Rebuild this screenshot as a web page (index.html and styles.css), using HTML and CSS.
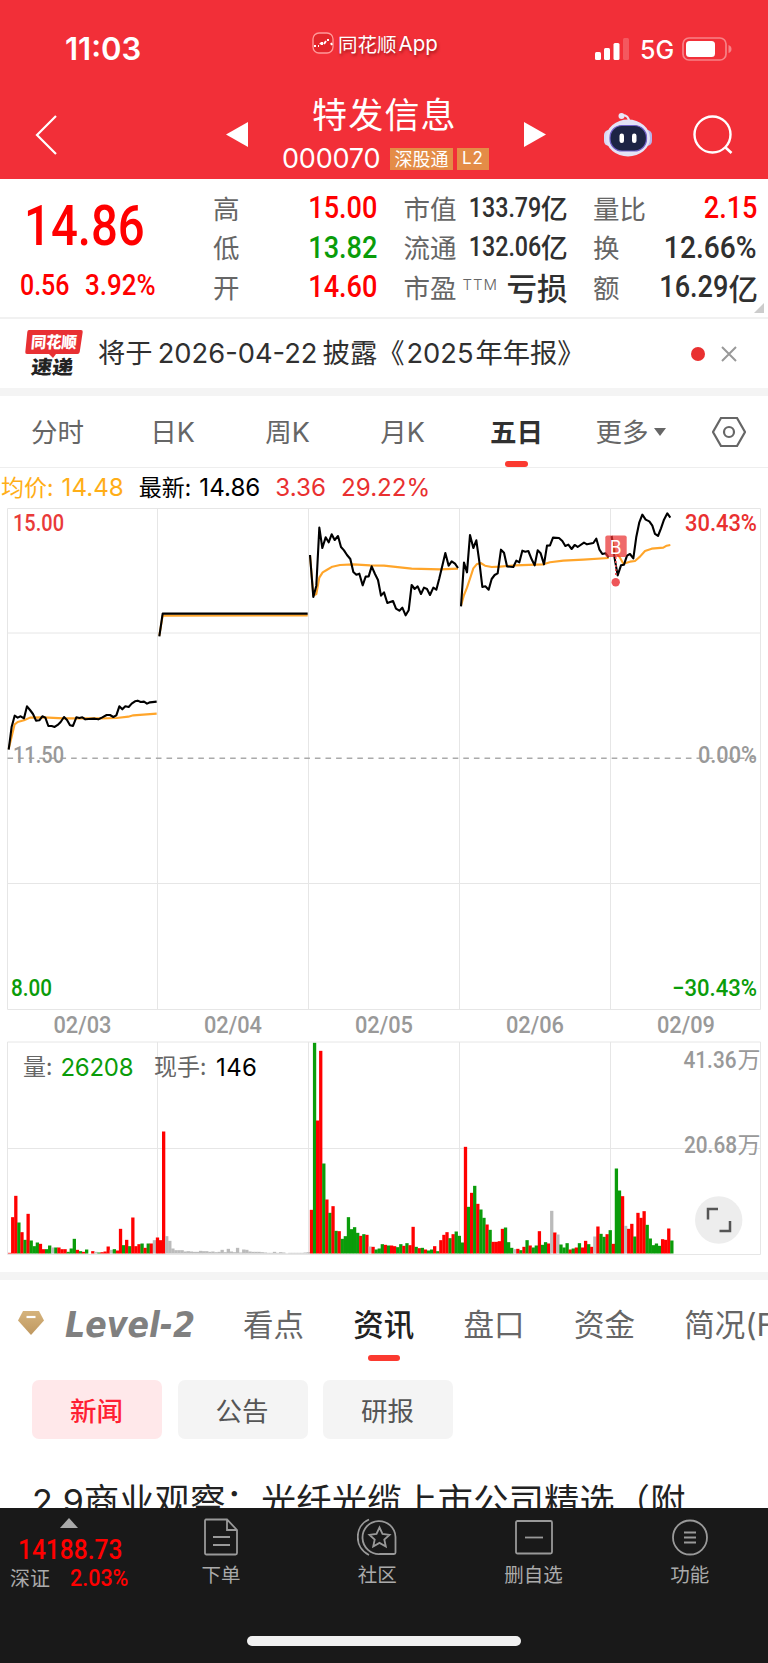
FILE: index.html
```html
<!DOCTYPE html>
<html lang="zh-CN">
<head>
<meta charset="utf-8">
<meta name="viewport" content="width=device-width, initial-scale=1">
<title>特发信息 000070</title>
<link rel="stylesheet" href="styles.css">
</head>
<body>

<div class="header">
  <div class="statusbar">
    <span class="clock">11:03</span>
    <span class="appname">
      <svg width="22" height="22" viewBox="0 0 22 22"><rect x="1" y="1" width="20" height="20" rx="6" fill="#e3262c" stroke="#f99" stroke-width="1.3"/><path d="M2 14h2M6 14h1M8 11l1 1M10 10v3M12 12l2-3M16 7v2M19 11l1 2" stroke="#fff" stroke-width="2"/></svg>
      同花顺<b>App</b>
    </span>
    <span class="signal">
      <svg width="34" height="22" viewBox="0 0 34 22" fill="#fff"><rect y="14" width="6" height="8" rx="1.5"/><rect x="9" y="10" width="6" height="12" rx="1.5"/><rect x="18.500" y="5" width="6" height="17" rx="1.500"/><rect x="28" width="6" height="22" rx="1.500" opacity=".2"/></svg>
      <span class="net">5G</span>
      <svg width="50" height="24" viewBox="0 0 50 24"><rect x="1" y="1" width="43" height="22" rx="6" fill="none" stroke="#fff" stroke-opacity=".4" stroke-width="1.700"/><rect x="4" y="4" width="29" height="16" rx="3.500" fill="#fff"/><path d="M46.500 8q3 1 3 4t-3 4z" fill="#fff" opacity=".4"/></svg>
    </span>
  </div>
  <div class="titlebar">
    <svg class="back" width="22" height="40" viewBox="0 0 22 40"><path d="M21 1L2 20l19 19" fill="none" stroke="#fff" stroke-width="2.200"/></svg>
    <svg class="prev" width="22" height="26" viewBox="0 0 22 26"><path d="M22 0v25L0 12.500z" fill="#fff"/></svg>
    <div class="stock">
      <div class="stockname">特发信息</div>
      <div class="stockcode"><span class="code">000070</span><span class="tag">深股通</span><span class="tag tag-l2">L2</span></div>
    </div>
    <svg class="next" width="22" height="26" viewBox="0 0 22 26"><path d="M0 0v25l22-12.500z" fill="#fff"/></svg>
    <svg class="robot" width="48" height="46" viewBox="0 0 48 46">
      <path d="M18 3q7 0 7 7" fill="none" stroke="#e9e6f7" stroke-width="2"/><circle cx="17.500" cy="4" r="3" fill="#e9e6f7"/>
      <rect y="18" width="10" height="16" rx="5" fill="#d8d8f4"/><rect x="38" y="18" width="10" height="16" rx="5" fill="#b7b4ea"/>
      <ellipse cx="24" cy="26" rx="22" ry="18.500" fill="#e4e3f6"/>
      <rect x="6" y="13.500" width="36.500" height="25.500" rx="12" fill="#1d2444" stroke="#7160c8" stroke-width="1.200"/>
      <rect x="15.500" y="21.500" width="4.500" height="9.500" rx="2.200" fill="#fff"/><rect x="28" y="21.500" width="4.500" height="9.500" rx="2.200" fill="#fff"/>
    </svg>
    <svg class="search" width="40" height="40" viewBox="0 0 40 40"><circle cx="19.500" cy="19.500" r="18" fill="none" stroke="#fff" stroke-width="2.400"/><path d="M32 32l6.500 6" stroke="#fff" stroke-width="2.600"/></svg>
  </div>
</div>

<div class="quote">
  <div class="price">
    <div class="last"><span class="din">14.86</span></div>
    <div class="change"><span class="din">0.56</span><span class="din pct">3.92%</span></div>
  </div>
  <div class="figures">
    <div class="col">
      <div class="fig"><label>高</label><span class="din red">15.00</span></div>
      <div class="fig"><label>低</label><span class="din green">13.82</span></div>
      <div class="fig"><label>开</label><span class="din red">14.60</span></div>
    </div>
    <div class="col">
      <div class="fig small"><label>市值</label><span class="din">133.79</span><i>亿</i></div>
      <div class="fig small"><label>流通</label><span class="din">132.06</span><i>亿</i></div>
      <div class="fig"><label>市盈<sup>TTM</sup></label><i class="loss">亏损</i></div>
    </div>
    <div class="col">
      <div class="fig"><label>量比</label><span class="din red">2.15</span></div>
      <div class="fig"><label>换</label><span class="din pct">12.66%</span></div>
      <div class="fig"><label>额</label><span class="din">16.29</span><i>亿</i></div>
    </div>
  </div>
  <div class="corner"></div>
</div>

<div class="notice">
  <svg width="58" height="48" viewBox="0 0 58 48">
    <path d="M4 0h52q2 0 1.700 2l-3 20q-.3 2-2.300 2H31l-3 4-4-4H2q-2 0-1.700-2l2-20q.2-2 1.700-2z" fill="#e83033"/>
    <text x="6" y="18" class="logo-top" textLength="46" lengthAdjust="spacingAndGlyphs" transform="skewX(-5) translate(1 0)">同花顺</text>
    <text x="7" y="44" class="logo-bottom" textLength="42" lengthAdjust="spacingAndGlyphs" transform="skewX(-7) translate(4 0)">速递</text>
  </svg>
  <p>将于<em>2026-04-22</em>披露《<em class="year">2025</em>年年报》</p>
  <span class="dot"></span>
  <svg class="close" width="16" height="16" viewBox="0 0 16 16"><path d="M1 1l14 14M15 1L1 15" stroke="#999" stroke-width="2"/></svg>
</div>

<div class="periods">
  <a>分时</a>
  <a>日<b>K</b></a>
  <a>周<b>K</b></a>
  <a>月<b>K</b></a>
  <a class="active">五日</a>
  <a>更多<span class="caret"></span></a>
  <svg width="34" height="30" viewBox="0 0 34 30" fill="none" stroke="#666" stroke-width="2.200"><path d="M9 1h16l8 14-8 14H9L1 15z"/><circle cx="17" cy="15" r="5"/></svg>
</div>

<div class="legend"><span class="avg">均价: <b>14.48</b></span><span>最新: <b>14.86</b></span><span class="up"><b>3.36</b></span><span class="up"><b>29.22%</b></span></div>

<svg class="chart" width="768" height="764" viewBox="0 508 768 764">
  <g fill="none" stroke="#e6e6e6" stroke-width="1">
    <path d="M7.500 508.500h753v501H7.500zM7.500 633h753M7.500 883.500h753M157.500 508.500v501M308.500 508.500v501M459.500 508.500v501M610.500 508.500v501"/>
    <path d="M7.500 1042h753v212.500H7.500zM7.500 1148.500h753M157.500 1042v212.500M308.500 1042v212.500M459.500 1042v212.500M610.500 1042v212.500"/>
  </g>
  <path d="M7.500 758.200h750" stroke="#aaa" stroke-width="1.500" stroke-dasharray="5.600 5"/>

  <!-- average and price lines, three units to a pixel -->
  <g transform="translate(0 395) scale(.33333)" fill="none" stroke-width="6.300" stroke-linejoin="round">
    <g stroke="#ffa52a">
      <polyline points="26,1062 44,988 53,981 72,976 90,968 130,967 190,970 240,970 300,970 350,969 385,965 400,961 430,959 470,956"/>
      <polyline points="478,722 488,662 923,661"/>
      <polyline points="930,480 940,602 949,597 958,548 968,532 980,525 997,515 1020,510 1060,508 1110,511 1152,512 1200,517 1235,521 1320,523 1374,521"/>
      <polyline points="1383,632 1392,600 1401,578 1412,545 1420,520 1430,508 1442,504 1455,512 1475,516 1500,515 1545,511 1630,508 1650,502 1690,497 1750,494 1826,489"/>
      <polyline points="1835,425 1845,470 1860,488 1870,506 1890,500 1905,498 1920,485 1935,468 1955,461 1990,458 2000,452 2011,450"/>
    </g>
    <g stroke="#000">
      <polyline points="26,1064 35,995 44,962 53,968 62,964 72,970 81,934 90,945 99,957 108,977 118,976 127,964 136,968 145,993 155,993 164,996 173,990 182,981 192,966 201,975 210,991 219,993 229,967 238,969 247,967 256,973 266,972 284,971 295,973 307,967 320,960 330,960 340,966 349,961 358,934 367,943 376,934 386,936 395,926 405,919 413,917 422,921 432,920 441,926 450,922 470,920"/>
      <polyline points="478,724 488,656 923,656"/>
      <polyline points="930,480 940,606 949,572 958,398 967,459 977,427 986,442 995,418 1004,435 1014,423 1023,456 1032,466 1041,480 1051,492 1060,531 1069,539 1078,536 1088,571 1097,545 1106,544 1115,514 1125,537 1134,555 1143,602 1152,592 1162,624 1179,618 1188,641 1198,647 1207,638 1217,661 1226,646 1235,570 1244,582 1253,574 1263,597 1272,578 1281,582 1290,600 1300,578 1309,584 1318,550 1327,512 1336,474 1346,512 1355,499 1365,506 1374,519"/>
      <polyline points="1383,634 1392,503 1401,532 1410,420 1420,459 1429,436 1438,500 1447,576 1456,574 1466,584 1475,552 1484,540 1493,535 1503,464 1512,473 1521,514 1540,516 1549,497 1558,502 1567,467 1576,470 1585,468 1595,493 1604,511 1613,466 1622,475 1632,508 1641,452 1650,451 1659,428 1677,429 1687,438 1696,453 1705,449 1715,462 1724,450 1733,456 1752,443 1761,448 1780,444 1789,431 1798,463 1807,477 1817,475 1826,487"/>
      <polyline points="1835,423 1844,490 1853,541 1863,511 1872,509 1881,482 1890,477 1900,490 1909,425 1918,382 1927,359 1937,374 1948,379 1957,392 1965,417 1974,423 1983,400 1992,374 2002,355 2011,368"/>
    </g>
  </g>

  <g id="volume"></g>

  <!-- buy point -->
  <path d="M615.800 557v20" stroke="#ee4a4d" stroke-width="1.500" stroke-dasharray="2 2"/>
  <circle cx="615.700" cy="582.300" r="4.200" fill="#ee5558"/>
  <rect x="605.300" y="535.500" width="21.400" height="21.500" rx="2" fill="#e93030" opacity=".72"/>
  <text x="609.700" y="553.500" class="buy">B</text>

  <g class="axis">
    <text x="13" y="530.500" fill="#e93a3a" textLength="51" lengthAdjust="spacingAndGlyphs">15.00</text>
    <text x="685" y="530.500" fill="#e93030" textLength="72" lengthAdjust="spacingAndGlyphs">30.43%</text>
    <text x="13" y="763" fill="#999" textLength="51" lengthAdjust="spacingAndGlyphs">11.50</text>
    <text x="698" y="763" fill="#999" textLength="59" lengthAdjust="spacingAndGlyphs">0.00%</text>
    <text x="11" y="995.500" fill="#0a9c0a" textLength="41" lengthAdjust="spacingAndGlyphs">8.00</text>
    <text x="672" y="995.500" fill="#0a9c0a" textLength="85" lengthAdjust="spacingAndGlyphs">−30.43%</text>
  </g>
  <g class="axis" fill="#999">
    <text x="53.500" y="1033" textLength="58" lengthAdjust="spacingAndGlyphs">02/03</text>
    <text x="204" y="1033" textLength="58" lengthAdjust="spacingAndGlyphs">02/04</text>
    <text x="355" y="1033" textLength="58" lengthAdjust="spacingAndGlyphs">02/05</text>
    <text x="506" y="1033" textLength="58" lengthAdjust="spacingAndGlyphs">02/06</text>
    <text x="657" y="1033" textLength="58" lengthAdjust="spacingAndGlyphs">02/09</text>
    <text x="683.500" y="1067.500" textLength="53" lengthAdjust="spacingAndGlyphs">41.36</text>
    <text x="737.500" y="1068" class="cjk">万</text>
    <text x="684" y="1152.500" textLength="53" lengthAdjust="spacingAndGlyphs">20.68</text>
    <text x="737.500" y="1153" class="cjk">万</text>
  </g>
  <g class="voltext">
    <text x="23" y="1075" fill="#666">量:</text>
    <text x="60.500" y="1075.500" fill="#0a9c0a" textLength="73" class="num">26208</text>
    <text x="154" y="1075" fill="#666">现手:</text>
    <text x="216" y="1075.500" fill="#000" textLength="41" class="num">146</text>
  </g>

  <circle cx="718.700" cy="1220" r="23.700" fill="#ededed"/>
  <path d="M718 1209h-10v10.500M730 1221v10h-10.500" fill="none" stroke="#555" stroke-width="2.500"/>
</svg>

<div class="band"></div>

<div class="sections">
  <svg class="gem" width="28" height="26" viewBox="0 0 28 26"><defs><linearGradient id="gold" x2="0" y2="1"><stop stop-color="#d5b37c"/><stop offset="1" stop-color="#bf9860"/></linearGradient></defs><path d="M6 1h16l5 9.500L14 25 1 10.500z" fill="url(#gold)"/><path d="M9.500 7h9" stroke="#fff" stroke-width="2.200"/></svg>
  <svg class="level" width="132" height="36" viewBox="0 0 132 36"><text x="0" y="31.500" textLength="130" lengthAdjust="spacingAndGlyphs">Level-2</text></svg>
  <a>看点</a>
  <a class="active">资讯</a>
  <a>盘口</a>
  <a>资金</a>
  <a>简况<b>(F10)</b></a>
</div>

<div class="pills">
  <button class="on">新闻</button>
  <button>公告</button>
  <button>研报</button>
</div>

<div class="news"><b>2.9</b>商业观察：光纤光缆上市公司精选（附</div>

<div class="footer">
  <div class="bar">
    <div class="index">
      <span class="tri"></span>
      <div class="points"><span class="din">14188.73</span></div>
      <div class="market">深证<span class="din pct">2.03%</span></div>
    </div>
    <div class="item">
      <svg width="36" height="38" viewBox="0 0 36 38"><path d="M3 1.500h21L34 12v23q0 1.500-1.500 1.500h-29Q2 36.500 2 35V3q0-1.500 1-1.500zM24 2v10h10M10 19h17M10 27h17"/></svg>
      <span>下单</span>
    </div>
    <div class="item">
      <svg width="40" height="38" viewBox="0 0 40 38"><path d="M12 1.500C-3 8-3 30 12 37M38.500 34.500q0 1.500-1.500 1.500H23A16.500 16.500 0 1 1 38.500 19zM22.500 9.500l3 6.500 7 .8-5.200 4.700 1.500 7-6.300-3.600-6.300 3.600 1.500-7-5.200-4.700 7-.8z"/></svg>
      <span>社区</span>
    </div>
    <div class="item">
      <svg width="38" height="38" viewBox="0 0 38 38"><rect x="1" y="3" width="36" height="32.500" rx="1.500"/><path d="M10 19.500h18"/></svg>
      <span>删自选</span>
    </div>
    <div class="item">
      <svg width="38" height="38" viewBox="0 0 38 38"><circle cx="19" cy="19.500" r="17"/><path d="M13 14.500h12M13 19.500h12M13 24.500h12"/></svg>
      <span>功能</span>
    </div>
  </div>
  <div class="home"></div>
</div>

<script>
// r = up, g = down, w = flat; the number is the height in thirds of a pixel
var days = [
  "r2 r109 r173 g93 r64 g41 r119 g39 g22 g33 r29 r13 g13 g24 w18 g18 r18 r13 r13 g5 g15 g44 r11 g7 r5 g12 w0 r7 w5 g3 r4 r6 r21 w11 g13 r9 r74 g25 r41 g22 r108 r22 r28 g30 r17 g30 r30 w40 r48",
  "r40 r366 w52 w38 w15 w10 w10 w10 w6 w7 w6 w5 w5 w8 w7 w7 w5 w6 w4 w5 w11 w4 w14 w6 w4 w17 w3 w12 w11 w6 w5 w5 w5 w4 w3 w2 w2 w5 w2 w4 w3 w1 w2 w2 w2 w2 w2 w3 w4",
  "r131 g632 r399 r608 g270 r162 g122 r142 g68 r67 g44 g52 g109 g73 g79 g62 r53 g58 r56 w21 r20 g12 g15 g28 r26 g24 r24 r22 g19 g28 r23 g31 r25 r80 g20 r16 g17 r12 g9 g12 r22 g7 r40 r56 r64 g46 r58 g66 g53",
  "g33 r320 g140 r182 g203 r149 g132 g107 r87 g71 r35 r35 r37 r74 g78 g34 g17 w13 r14 g10 r20 g40 r24 g18 g24 r67 g26 g34 r30 w128 r63 w57 g27 g18 g31 r12 g15 r18 g31 r18 r38 g28 r20 w51 r81 g59 g50 r58 g70",
  "r29 g255 g189 r172 w83 r74 r89 g51 r122 r107 r127 g86 g45 g25 g30 g23 r43 r41 r75 g39"
];
var colors = { r: "#ff0000", g: "#0a9c0a", w: "#bbbbbb" };
var volume = document.getElementById("volume");
for (var d = 0; d < days.length; d++) {
  var bars = days[d].split(" ");
  for (var i = 0; i < bars.length; i++) {
    var h = bars[i].substring(1) / 3;
    var rect = document.createElementNS("http://www.w3.org/2000/svg", "rect");
    rect.setAttribute("x", 8 + (d * 49 + i) * 3.08);
    rect.setAttribute("y", 1253.5 - h);
    rect.setAttribute("width", 3.3);
    rect.setAttribute("height", h);
    rect.setAttribute("fill", colors[bars[i].charAt(0)]);
    volume.appendChild(rect);
  }
}
</script>

</body>
</html>
```
FILE: styles.css
```css
* {
  box-sizing: border-box;
}

body {
  margin: 0;
  width: 768px;
  height: 1663px;
  overflow: hidden;
  display: flex;
  flex-direction: column;
  background: #fff;
  color: #303030;
  font-family: "Noto Sans CJK SC", sans-serif;
}

body > * {
  flex-shrink: 0;
}

svg {
  display: block;
  flex-shrink: 0;
}

i, em {
  font-style: normal;
}

.din {
  display: inline-block;
  font-family: Roboto, sans-serif;
  font-weight: 500;
  transform: scaleX(.86);
  transform-origin: right center;
}

.din.pct {
  transform: scaleX(.895);
}

.red { color: #ff0000; }
.green { color: #0a9c0a; }

/* header */
.header {
  height: 179px;
  background: #f22f38;
  color: #fff;
}

.statusbar {
  display: flex;
  height: 88px;
  padding-left: 65px;
}

.clock {
  width: 247px;
  padding-top: 31px;
  font: 600 31px/36px Inter, sans-serif;
}

.appname {
  display: flex;
  align-items: center;
  gap: 4px;
  width: 283px;
  height: 34px;
  margin-top: 26px;
  font-size: 19.5px;
  text-shadow: 1px 2px 3px rgba(80, 0, 0, .5);
}

.appname b {
  margin-left: -2px;
  font: 400 20.500px Inter, sans-serif;
}

.signal {
  display: flex;
  align-items: center;
  height: 24px;
  margin-top: 37px;
}

.net {
  width: 42px;
  margin-left: 11px;
  padding-top: 2px;
  font: 500 25px/24px Inter, sans-serif;
}

.titlebar {
  display: flex;
  align-items: flex-start;
}

.back { margin: 27px 0 0 35px; }
.prev { margin: 34px 0 0 169px; }
.next { margin: 34px 0 0 28px; }
.robot { margin: 24px 0 0 58px; }
.search { margin: 27px 0 0 41px; }

.stock {
  width: 214px;
  margin-left: 34px;
}

.stockname {
  margin-left: 30px;
  height: 55px;
  font-size: 35px;
  line-height: 50px;
  letter-spacing: 1.200px;
  white-space: nowrap;
}

.stockcode {
  display: flex;
  align-items: center;
  height: 32px;
}

.code {
  width: 108px;
  font: 400 27px/32px Inter, sans-serif;
  letter-spacing: -.2px;
}

.tag {
  width: 63px;
  height: 22px;
  background: #e48c47;
  font-size: 18px;
  line-height: 21px;
  text-align: center;
}

.tag-l2 {
  width: 32px;
  margin-left: 4px;
  font-family: Inter, sans-serif;
  font-size: 17px;
  letter-spacing: 1px;
}

/* quote */
.quote {
  position: relative;
  display: flex;
  height: 140px;
  border-bottom: 2px solid #f1f1f1;
}

.price {
  width: 213px;
  color: #ff0000;
}

.price .din {
  transform-origin: left center;
}

.last {
  height: 78px;
  padding: 10px 0 0 24px;
  font-size: 55px;
  line-height: 64px;
}

.change {
  display: flex;
  padding: 12px 0 0 20px;
  font-size: 29px;
  line-height: 32px;
}

.change .din:first-child {
  width: 65px;
}

.figures {
  display: grid;
  grid-template-columns: 164px 163px 164px;
  column-gap: 26.500px;
  padding-top: 9px;
}

.fig {
  display: flex;
  align-items: center;
  height: 39.500px;
  font-size: 31.500px;
}

.fig label {
  margin-right: auto;
  font-size: 26.500px;
  line-height: 36px;
  color: #666;
  white-space: nowrap;
}

.fig sup {
  margin-left: 6px;
  font: 300 15px/15px Inter, sans-serif;
  letter-spacing: 1px;
  vertical-align: 8px;
}

.fig i {
  margin-right: -1px;
  font-size: 29.500px;
  line-height: 36px;
  font-weight: 500;
}

.fig .loss {
  font-size: 30.500px;
}

.small {
  font-size: 27px;
}

.small i {
  font-size: 27px;
}

.corner {
  position: absolute;
  right: 4px;
  bottom: 4px;
  border: 5px solid #ccc;
  border-top-color: transparent;
  border-left-color: transparent;
}

/* notice */
.notice {
  display: flex;
  align-items: center;
  height: 77px;
  padding-left: 25px;
  border-bottom: 8px solid #f4f4f4;
}

.logo-top {
  font-size: 16px;
  font-weight: 900;
  fill: #fff;
}

.logo-bottom {
  font-size: 19px;
  font-weight: 900;
  fill: #222;
}

.notice p {
  width: 593px;
  margin: -3px 0 0 15px;
  font-size: 27.300px;
  line-height: 40px;
  white-space: nowrap;
}

.notice em {
  display: inline-block;
  width: 170px;
  text-align: center;
  font-family: Inter, sans-serif;
  font-size: 27.300px;
}

.notice .year {
  width: 71px;
}

.dot {
  width: 14px;
  height: 14px;
  border-radius: 50%;
  background: #e93030;
}

.close {
  margin-left: 16px;
}

/* period tabs */
.periods {
  display: flex;
  align-items: center;
  height: 72px;
  border-bottom: 1px solid #eee;
}

.periods a {
  position: relative;
  width: 115px;
  height: 71px;
  font-size: 26.500px;
  line-height: 70px;
  text-align: center;
  color: #666;
}

.periods a:nth-child(6) {
  padding-right: 4px;
}

.periods b {
  font: 400 27px Inter, sans-serif;
}

.periods .active {
  padding-right: 2px;
  font-weight: 700;
  color: #303030;
}

.periods .active::after,
.sections .active::after {
  content: "";
  position: absolute;
  left: 45px;
  bottom: 0;
  width: 23px;
  height: 6px;
  border-radius: 3px;
  background: #fb3a30;
}

.caret {
  display: inline-block;
  margin-left: 5px;
  border: 6.500px solid transparent;
  border-top: 8px solid #666;
  border-bottom: 0;
  vertical-align: 6px;
}

.periods svg {
  margin-left: 22px;
}

/* legend */
.legend {
  display: flex;
  gap: 15px;
  height: 40px;
  padding-left: 1px;
  font-size: 23px;
  line-height: 36px;
  word-spacing: 3px;
  color: #000;
}

.legend b {
  font: 400 24.200px Inter, sans-serif;
}

.legend .avg { color: #ffae17; }
.legend .up { color: #e93030; }

/* chart */
.axis {
  font-family: Roboto, sans-serif;
  font-size: 23.500px;
  font-weight: 500;
}

.axis .cjk {
  font-family: "Noto Sans CJK SC", sans-serif;
  font-size: 23px;
  font-weight: 400;
}

.voltext {
  font-size: 23px;
}

.voltext .num {
  font-family: Inter, sans-serif;
  font-size: 24px;
}

.buy {
  font-family: Inter, sans-serif;
  font-size: 18px;
  fill: #fff;
}

.band {
  height: 8px;
  background: #f4f4f4;
}

/* section tabs */
.sections {
  display: flex;
  align-items: center;
  height: 100px;
  padding: 0 0 14px 17px;
  overflow: hidden;
}

.level {
  margin: 0 46px 0 20px;
}

.level text {
  font-family: "DejaVu Sans", sans-serif;
  font-size: 36px;
  font-style: italic;
  font-weight: 700;
  fill: #808080;
}

.sections a {
  position: relative;
  flex-shrink: 0;
  width: 62px;
  margin-right: 48.300px;
  font-size: 30.500px;
  line-height: 74px;
  color: #666;
  white-space: nowrap;
}

.sections b {
  font: 400 31px Inter, sans-serif;
}

.sections .active {
  font-weight: 500;
  color: #222;
}

.sections .active::after {
  left: 15px;
  bottom: -1px;
  width: 32px;
}

.pills {
  display: flex;
  gap: 15.500px;
  padding-left: 32px;
}

.pills button {
  width: 130px;
  height: 59px;
  padding: 0 1px 1px 0;
  border: 0;
  border-radius: 7px;
  background: #f4f4f4;
  color: #555;
  font-family: inherit;
  font-size: 26.500px;
}

.pills .on {
  background: #ffe8ea;
  color: #ff1f33;
  font-weight: 500;
}

.news {
  height: 69px;
  padding: 30px 0 0 32px;
  overflow: hidden;
  font-size: 35.200px;
  line-height: 60px;
  letter-spacing: .2px;
  white-space: nowrap;
  color: #222;
}

.news b {
  font: 400 34px Inter, sans-serif;
}

/* footer */
.footer {
  height: 155px;
  background: #191919;
  color: #aaa;
}

.bar {
  display: flex;
  height: 128px;
}

.index {
  width: 143px;
  padding-top: 10px;
}

.tri {
  display: block;
  width: 18px;
  margin-left: 60px;
  border: 9px solid transparent;
  border-top: 0;
  border-bottom: 10px solid #aaa;
}

.index .din {
  color: #ff0000;
  transform-origin: left center;
}

.points {
  height: 35px;
  padding-left: 18px;
  font-size: 28.500px;
  line-height: 37px;
}

.market {
  display: flex;
  padding-left: 10px;
  font-size: 20px;
  line-height: 30px;
}

.market .din {
  margin-left: 20px;
  font-size: 24px;
}

.item {
  display: flex;
  flex-direction: column;
  align-items: center;
  width: 156.500px;
  padding-top: 10px;
  font-size: 19.500px;
}

.item svg {
  fill: none;
  stroke: #999;
  stroke-width: 1.800;
}

.item span {
  margin-top: 3px;
  line-height: 30px;
}

.home {
  width: 274px;
  height: 10px;
  margin: 0 auto;
  border-radius: 5px;
  background: #f1f1f1;
}
```
